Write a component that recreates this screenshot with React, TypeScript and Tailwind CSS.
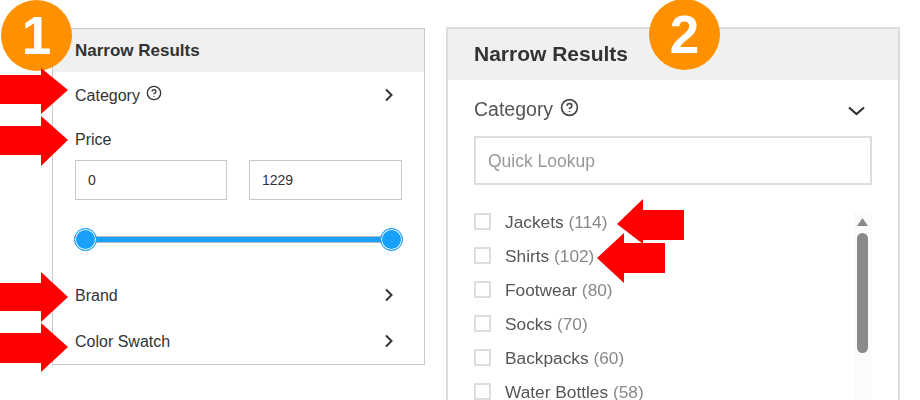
import React from "react";
import { CircleHelp } from "lucide-react";

const categories = [
  { name: "Jackets", count: 114 },
  { name: "Shirts", count: 102 },
  { name: "Footwear", count: 80 },
  { name: "Socks", count: 70 },
  { name: "Backpacks", count: 60 },
  { name: "Water Bottles", count: 58 },
];

const Chevron: React.FC = () => (
  <svg width="10" height="14" viewBox="0 0 10 14" fill="none" className="-mt-[2px] shrink-0">
    <path d="M2 1.5 L7.5 7 L2 12.5" stroke="#333" strokeWidth="2" />
  </svg>
);

const LeftRow: React.FC<{ label: string; help?: boolean }> = ({ label, help }) => (
  <div className="flex h-[46px] items-center justify-between pl-[22px] pr-[30px] pt-[2px] text-[16px] text-[#333]">
    <span className="flex items-center gap-[6px]">
      {label}
      {help && <CircleHelp size={16} strokeWidth={2} className="-mt-[6px] text-[#333]" />}
    </span>
    <Chevron />
  </div>
);

const App: React.FC = () => {
  return (
    <div className="relative flex h-[400px] w-[920px] items-start overflow-hidden bg-white font-['Liberation_Sans',Arial,sans-serif]">
      {/* Panel 1 */}
      <div className="ml-[52px] mt-[28px] h-[337px] w-[373px] shrink-0 border border-[#c8c8c8]">
        <div className="flex h-[43px] items-center bg-[#f0f0f0] pl-[22px] text-[17px] font-bold text-[#333]">
          Narrow Results
        </div>
        <LeftRow label="Category" help />
        <div className="flex h-[42px] items-center pl-[22px] pt-[2px] text-[16px] text-[#333]">Price</div>
        <div className="flex gap-[22px] pl-[22px]">
          <div className="flex h-[40px] w-[152px] items-center border border-[#c8c8c8] pl-[12px] text-[14px] text-[#333]">0</div>
          <div className="flex h-[40px] w-[153px] items-center border border-[#c8c8c8] pl-[12px] text-[14px] text-[#333]">1229</div>
        </div>
        <div className="h-[72px] pl-[33px] pr-[33px] pt-[36px]">
          <div className="relative h-[7px] border-y border-[#bbbbbb] bg-[#18a0fb]">
            <span className="absolute -left-[12px] -top-[9px] h-[23px] w-[23px] rounded-full border border-[#18a0fb] bg-[#18a0fb] shadow-[inset_0_0_0_1px_#ffffff]" />
            <span className="absolute -right-[12px] -top-[9px] h-[23px] w-[23px] rounded-full border border-[#18a0fb] bg-[#18a0fb] shadow-[inset_0_0_0_1px_#ffffff]" />
          </div>
        </div>
        <LeftRow label="Brand" />
        <LeftRow label="Color Swatch" />
      </div>

      {/* Panel 2 */}
      <div className="ml-[21px] mt-[27px] w-[454px] shrink-0 border-2 border-[#dddddd] blur-[0.4px]">
        <div className="flex h-[51px] items-center bg-[#f0f0f0] pb-[2px] pl-[26px] text-[21px] font-bold text-[#333]">
          Narrow Results
        </div>
        <div className="flex h-[56px] items-center justify-between pl-[26px] pr-[33px] pt-[4px] text-[19.5px] text-[#555]">
          <span className="flex items-center gap-[7px]">
            Category
            <CircleHelp size={19} strokeWidth={2.1} className="-mt-[5px] text-[#444]" />
          </span>
          <svg width="17" height="10" viewBox="0 0 17 10" fill="none" className="mt-[2px]">
            <path d="M1 1.5 L8.5 8 L16 1.5" stroke="#333" strokeWidth="2.2" />
          </svg>
        </div>
        <div className="ml-[26px] flex h-[49px] w-[398px] items-center border-2 border-[#dddddd] pl-[12px] pt-[2px] text-[17.5px] text-[#999]">
          Quick Lookup
        </div>
        <div className="flex pl-[26px] pr-[26px]">
          <ul className="mt-[20px] flex-1">
            {categories.map((c) => (
              <li key={c.name} className="flex h-[34px] items-center gap-[14px] text-[17.3px] text-[#555]">
                <span className="-mt-[2px] h-[17px] w-[17px] border-2 border-[#dddddd]" />
                <span className="mt-[2px]">
                  {c.name} <span className="text-[#888]">({c.count})</span>
                </span>
              </li>
            ))}
          </ul>
          <div className="mt-[27px] flex h-[260px] w-[19px] flex-col items-center bg-[#fbfbfb] pt-[6px]">
            <svg width="11" height="8" viewBox="0 0 11 8">
              <path d="M5.5 0 L11 8 L0 8 Z" fill="#8a8a8a" />
            </svg>
            <div className="mt-[7px] h-[120px] w-[11px] rounded-full bg-[#8a8a8a]" />
          </div>
        </div>
      </div>

      {/* Numbered badges */}
      <div className="absolute left-[1px] top-0 flex h-[71px] w-[71px] items-center justify-center rounded-full bg-[#ff9100] text-[53px] font-bold text-white">
        1
      </div>
      <div className="absolute left-[649px] -top-px flex h-[71px] w-[71px] items-center justify-center rounded-full bg-[#ff9100] text-[53px] font-bold text-white">
        2
      </div>

      {/* Red callout arrows */}
      <svg className="absolute left-0 top-0 h-[400px] w-[920px]" viewBox="0 0 920 400">
        <path d="M0 75 H41 V68 L68 90 L41 114 V104 H0 Z" fill="#ff0000" />
        <path d="M0 126 H41 V116 L68 140 L41 166 V155 H0 Z" fill="#ff0000" />
        <path d="M0 283 H41 V272 L68 297 L41 322 V311 H0 Z" fill="#ff0000" />
        <path d="M0 333 H41 V323 L68 347 L41 372 V363 H0 Z" fill="#ff0000" />
        <path d="M684 210 H643 V199 L617 224 L643 244 V240 H684 Z" fill="#ff0000" />
        <path d="M665 243 H624 V233 L597 258 L624 283 V273 H665 Z" fill="#ff0000" />
      </svg>
    </div>
  );
};

export default App;
